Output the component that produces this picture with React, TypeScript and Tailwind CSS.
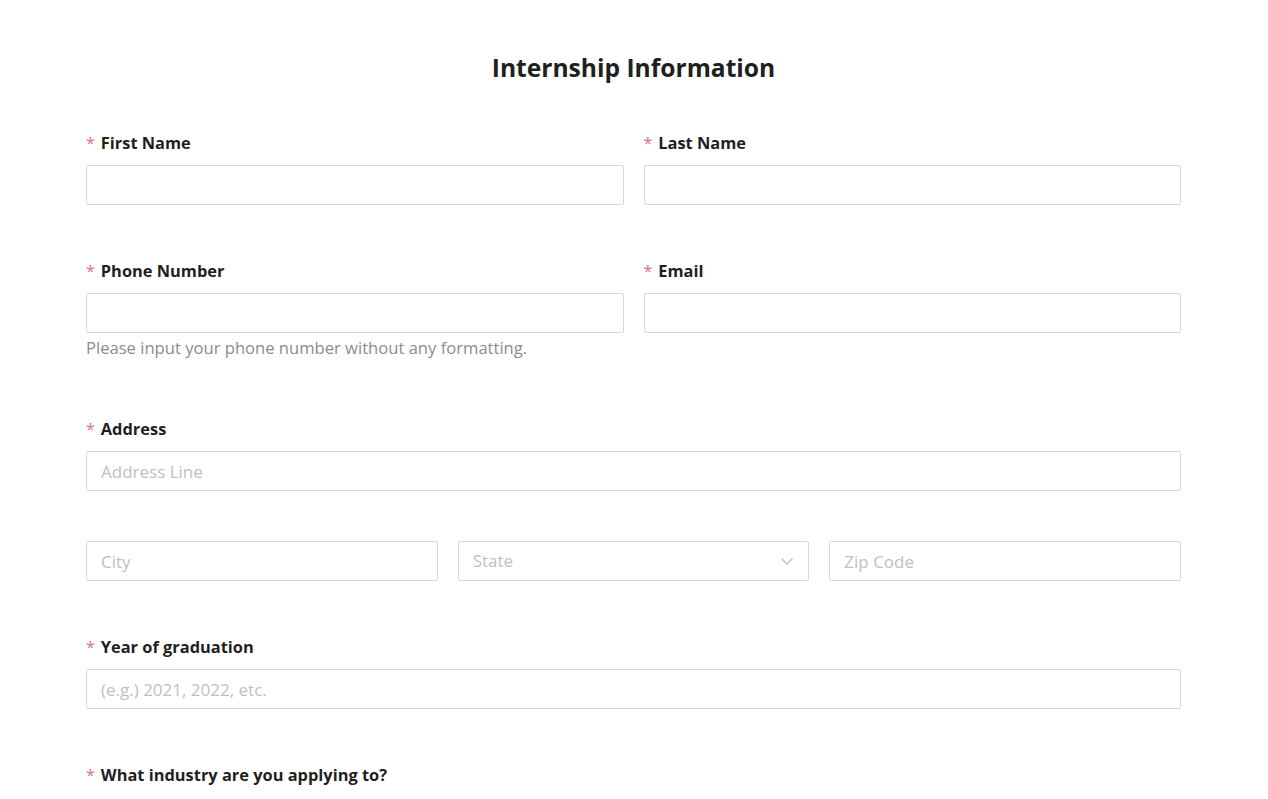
import React from 'react';

const font = { fontFamily: '"Open Sans", "Noto Sans", sans-serif' };

const Label: React.FC<{ text: string }> = ({ text }) => (
  <div className="flex items-center h-6 mb-[11px] pt-[2px] text-[16.4px] font-bold text-[#1f1f1f] leading-6">
    <span className="text-[#e5717a] mr-[6px] font-normal text-[16px]">*</span>
    {text}
  </div>
);

const Input: React.FC<{ placeholder?: string }> = ({ placeholder }) => (
  <input
    type="text"
    placeholder={placeholder}
    className="block w-full h-10 px-[14px] border border-[#d9d9d9] rounded-[2px] bg-white text-[17px] text-[#1f1f1f] placeholder:text-[#bfbfbf] outline-none"
  />
);

export default function App() {
  return (
    <div className="min-h-screen bg-white" style={font}>
      <div className="ml-[86px] mr-[87px] pt-[51px]">
        <h1 className="text-center text-[24.6px] font-bold text-[#1f1f1f] leading-[34px] mb-[45px]">
          Internship Information
        </h1>

        <div className="grid grid-cols-2 gap-x-5">
          <div>
            <Label text="First Name" />
            <Input />
          </div>
          <div>
            <Label text="Last Name" />
            <Input />
          </div>
        </div>

        <div className="grid grid-cols-2 gap-x-5 mt-[53px]">
          <div>
            <Label text="Phone Number" />
            <Input />
            <p className="mt-[3px] text-[16.6px] leading-6 text-[#8c8c8c]">
              Please input your phone number without any formatting.
            </p>
          </div>
          <div>
            <Label text="Email" />
            <Input />
          </div>
        </div>

        <div className="mt-[56px]">
          <Label text="Address" />
          <Input placeholder="Address Line" />
        </div>

        <div className="grid grid-cols-3 gap-x-5 mt-[50px]">
          <Input placeholder="City" />
          <div className="relative">
            <div className="flex items-center justify-between h-10 px-[14px] border border-[#d9d9d9] rounded-[2px] bg-white">
              <span className="text-[17px] text-[#bfbfbf]">State</span>
              <svg width="14" height="14" viewBox="0 0 14 14" fill="none" stroke="#bfbfbf" strokeWidth="1.3">
                <path d="M1.5 4.5 L7 10 L12.5 4.5" />
              </svg>
            </div>
          </div>
          <Input placeholder="Zip Code" />
        </div>

        <div className="mt-[53px]">
          <Label text="Year of graduation" />
          <Input placeholder="(e.g.) 2021, 2022, etc." />
        </div>

        <div className="mt-[53px]">
          <Label text="What industry are you applying to?" />
        </div>
      </div>
    </div>
  );
}
